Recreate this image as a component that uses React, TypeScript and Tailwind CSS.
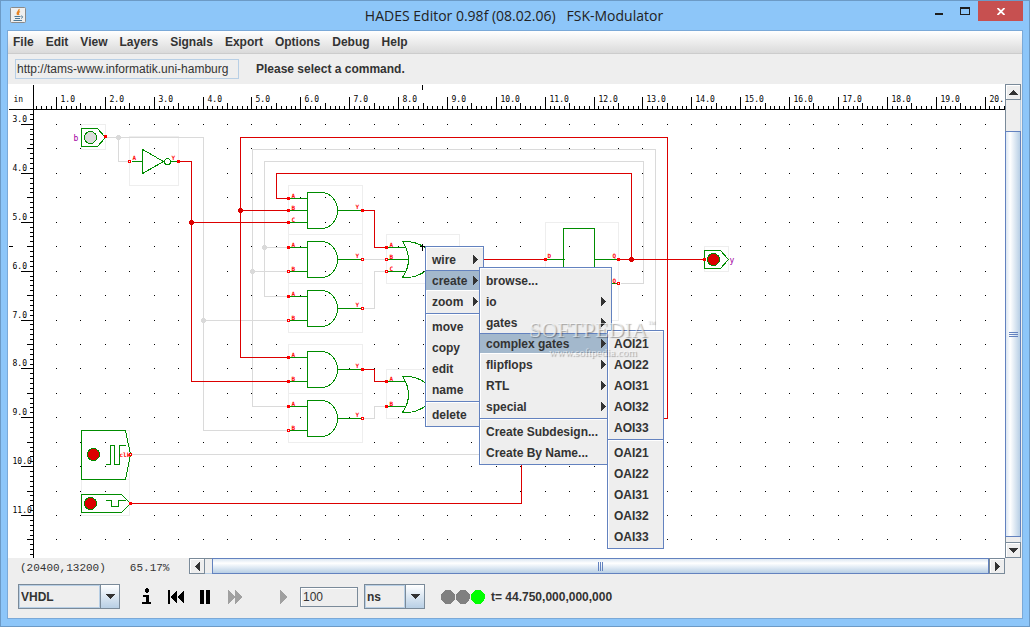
import React from 'react'

const STEP = 48.87
const GREEN = '#008c00'
const RED = '#dc0000'
const GREY = '#dadada'

const menus = ['File', 'Edit', 'View', 'Layers', 'Signals', 'Export', 'Options', 'Debug', 'Help']

type Item = { label?: string; sub?: boolean; active?: boolean }

const mainMenu: Item[] = [
    { label: 'wire', sub: true },
    { label: 'create', sub: true, active: true },
    { label: 'zoom', sub: true },
    {},
    { label: 'move' },
    { label: 'copy' },
    { label: 'edit' },
    { label: 'name' },
    {},
    { label: 'delete' },
]

const createMenu: Item[] = [
    { label: 'browse...' },
    { label: 'io', sub: true },
    { label: 'gates', sub: true },
    { label: 'complex gates', sub: true, active: true },
    { label: 'flipflops', sub: true },
    { label: 'RTL', sub: true },
    { label: 'special', sub: true },
    {},
    { label: 'Create Subdesign...' },
    { label: 'Create By Name...' },
]

const gatesMenu: Item[] = [
    { label: 'AOI21' },
    { label: 'AOI22' },
    { label: 'AOI31' },
    { label: 'AOI32' },
    { label: 'AOI33' },
    {},
    { label: 'OAI21' },
    { label: 'OAI22' },
    { label: 'OAI31' },
    { label: 'OAI32' },
    { label: 'OAI33' },
]

// wires carrying an undefined or low value
const greyWires = [
    'M105 137H203V430H288', 'M118 137V161H129', 'M203 320H288',
    'M252 406V149H655V394', 'M252 406H288', 'M252 271H288',
    'M264 296V161H643V283H620', 'M264 296H288', 'M264 247H288',
    'M362 259H386', 'M362 308H374V271H386', 'M362 418H374V406H386', 'M131 454H521',
]

const redWires = [
    'M178 161H191V381H288', 'M191 222H288',
    'M240 357V137H667V418H640', 'M240 357H288', 'M240 210H288',
    'M276 198V173H631V259', 'M276 198H288',
    'M362 210H374V247H386', 'M362 369H374V381H386',
    'M459 259H545', 'M618 259H704', 'M130 503H521V440',
]

const boxes = [
    [81, 124, 24, 25], [129, 136, 49, 49], [288, 185, 74, 49], [288, 234, 74, 49], [288, 283, 74, 49],
    [288, 344, 74, 49], [288, 393, 74, 49], [386, 234, 73, 49], [386, 369, 73, 49], [545, 222, 73, 98],
    [81, 430, 48, 49], [81, 479, 48, 36], [704, 246, 24, 25],
]

function Pin({ x, y, open }: { x: number; y: number; open?: boolean }) {
    return open
        ? <rect x={x - 1} y={y - 1} width="2" height="2" fill="#fff" stroke="#f00" />
        : <rect x={x - 1.5} y={y - 1.5} width="3" height="3" fill="#f00" />
}

function Tag({ x, y, children }: { x: number; y: number; children: string }) {
    return <text x={x} y={y} fill="#f00" fontSize="6" fontWeight="bold" fontFamily="'DejaVu Sans Mono', monospace">{children}</text>
}

type GateProps = { y: number; inputs: [string, number, boolean?][]; open?: boolean }

function AndGate({ y, inputs, open }: GateProps) {
    return (
        <g>
            <path d={`M307 ${y - 18}H321A16 18 0 0 1 321 ${y + 18}H307ZM337 ${y}H362`} fill="none" stroke={GREEN} />
            {inputs.map(([name, dy, o]) => (
                <g key={name}>
                    <path d={`M288 ${y + dy}H307`} stroke={GREEN} />
                    <Pin x={288} y={y + dy} open={o} />
                    <Tag x={291} y={y + dy - 1}>{name}</Tag>
                </g>
            ))}
            <Pin x={362} y={y} open={open} />
            <Tag x={355} y={y - 2}>Y</Tag>
        </g>
    )
}

function OrGate({ y, inputs }: GateProps) {
    return (
        <g>
            <path d={`M402 ${y - 18}Q414 ${y} 402 ${y + 18}H407Q424 ${y + 17} 437 ${y}Q424 ${y - 17} 407 ${y - 18}ZM437 ${y}H459`} fill="none" stroke={GREEN} />
            {inputs.map(([name, dy, o]) => (
                <g key={name}>
                    <path d={`M386 ${y + dy}H${dy ? 405 : 408}`} stroke={GREEN} />
                    <Pin x={386} y={y + dy} open={o} />
                    <Tag x={389} y={y + dy - 1}>{name}</Tag>
                </g>
            ))}
        </g>
    )
}

function Rulers() {
    const ticks = Array.from({ length: 400 }, (_, i) => i - 4)
    const len = (k: number) => (k % 10 === 0 ? 13 : k % 5 === 0 ? 7 : 4)
    return (
        <g>
            <path d="M8 109H3000M33 84V3000M422 84V89M8 246H12" stroke="#000" />
            {ticks.map((k) => {
                const x = Math.floor(56.5 + (STEP / 10) * k)
                const y = Math.floor(124.55 + (STEP / 10) * k)
                return (
                    <g key={k}>
                        <path d={`M${x} 109V${109.5 - len(k)}`} stroke="#000" />
                        {y > 109 && <path d={`M33 ${y}H${33.5 - len(k)}`} stroke="#000" />}
                    </g>
                )
            })}
            <g fill="#000" fontSize="8" fontWeight="normal" fontFamily="'DejaVu Sans Mono', monospace">
                <text x="13" y="101">in</text>
                {Array.from({ length: 20 }, (_, n) => (
                    <text key={n} x={Math.floor(56.5 + STEP * n) + 4} y="101">{n < 19 ? `${n + 1}.0` : '20.'}</text>
                ))}
                {Array.from({ length: 9 }, (_, n) => (
                    <text key={n} x="12" y={Math.floor(124.55 + STEP * n) - 3}>{`${n + 3}.0`}</text>
                ))}
            </g>
        </g>
    )
}

function Schematic() {
    return (
        <svg className="absolute inset-0 block h-full w-full" shapeRendering="crispEdges" role="img" aria-label="FSK modulator schematic">
            <g transform="translate(-7.5 -83.5)">
                {Array.from({ length: 70 }, (_, i) => Array.from({ length: 18 }, (_, j) => (
                    <rect
                        key={`${i}-${j}`}
                        x={Math.floor(56.5 + (STEP / 2) * i) - 0.5}
                        y={Math.floor(124.55 + (STEP / 2) * j) - 0.5}
                        width="1"
                        height="1"
                    />
                )))}
                {boxes.map(([x, y, w, h]) => <rect key={`${x}-${y}`} x={x} y={y} width={w} height={h} fill="none" stroke="#eee" />)}
                {greyWires.map((d) => <path key={d} d={d} fill="none" stroke={GREY} />)}
                {redWires.map((d) => <path key={d} d={d} fill="none" stroke={RED} />)}
                {[[118, 137], [252, 271], [264, 247], [203, 320]].map(([x, y]) => <circle key={x} cx={x} cy={y} r="2.5" fill={GREY} />)}
                {[[191, 222], [240, 210], [631, 259]].map(([x, y]) => <circle key={x} cx={x} cy={y} r="2.5" fill={RED} />)}

                <g fill="none" stroke={GREEN}>
                    <path d="M81 128H97L105 137L97 146H81Z" />
                    <circle cx="90" cy="137" r="6" fill={GREY} />
                    <path d="M131 161H142M142 149V173L163 161ZM170 161H178" />
                    <circle cx="167" cy="161" r="3" />
                    <path d="M81 430H125L130 454L125 479H81Z" />
                    <path d="M105 464H110V445H114V464H119V445H125" />
                    <circle cx="93" cy="454" r="6" fill={RED} />
                    <path d="M81 494H121L130 503L121 512H81Z" />
                    <path d="M105 500H111V506H118V500H125" />
                    <circle cx="90" cy="503" r="6" fill={RED} />
                    <path d="M563 228H594V300H563ZM545 259H564M594 259H618M594 283H618" />
                    <path d="M704 250H720L728 259L720 268H704Z" />
                    <circle cx="713" cy="259" r="6" fill={RED} />
                </g>

                <AndGate y={210} inputs={[['A', -12], ['B', 0], ['C', 12]]} />
                <AndGate y={259} inputs={[['A', -12], ['B', 12, true]]} open />
                <AndGate y={308} inputs={[['A', -12], ['B', 12, true]]} open />
                <AndGate y={369} inputs={[['A', -12], ['B', 12]]} />
                <AndGate y={418} inputs={[['A', -12], ['B', 12, true]]} open />
                <OrGate y={259} inputs={[['A', -12], ['B', 0, true], ['C', 12, true]]} />
                <OrGate y={394} inputs={[['A', -13], ['B', 12]]} />

                <Pin x={105} y={136} />
                <Pin x={129} y={161} open />
                <Pin x={178} y={161} />
                <Pin x={130} y={454} open />
                <Pin x={130} y={503} />
                <Pin x={545} y={259} />
                <Pin x={618} y={259} />
                <Pin x={618} y={283} open />
                <Pin x={704} y={259} />
                <Tag x={132} y={159}>A</Tag>
                <Tag x={171} y={159}>Y</Tag>
                <Tag x={119} y={456}>clk</Tag>
                <Tag x={547} y={257}>D</Tag>
                <Tag x={612} y={257}>Q</Tag>
                <Tag x={612} y={282}>Q</Tag>
                <g fill="#a000a0" fontSize="8" fontWeight="normal" fontFamily="'DejaVu Sans Mono', monospace">
                    <text x="73" y="140">b</text>
                    <text x="729" y="262">y</text>
                </g>
                <path d="M419 246H426M422 243V250" stroke="#000" />
                <Rulers />
            </g>
        </svg>
    )
}

function PopupMenu({ items, className }: { items: Item[]; className: string }) {
    return (
        <div role="menu" className={`absolute border border-[#6382bf] bg-[#eee] pt-[2px] pb-px shadow-[inset_1px_1px_0_#fff] ${className}`}>
            {items.map((item, i) => item.label ? (
                <button
                    key={i}
                    type="button"
                    role="menuitem"
                    className={`flex h-[21px] w-full items-center justify-between border-y pl-1.5 pr-[5px] whitespace-nowrap ${item.active ? 'border-t-[#6382bf] border-b-white bg-[#a3b8cc]' : 'border-transparent'}`}
                >
                    {item.label}
                    {item.sub && <svg width="5" height="9" shapeRendering="crispEdges"><path d="M0 0L5 4.5L0 9Z" fill="#333" /></svg>}
                </button>
            ) : (
                <div key={i} role="separator" className="h-1 pt-px">
                    <div className="h-[2px] border-t border-b border-t-[#6382bf] border-b-white" />
                </div>
            ))}
        </div>
    )
}

function ScrollButton({ d, label }: { d: string; label: string }) {
    return (
        <button type="button" aria-label={label} className="flex size-4 shrink-0 items-center justify-center border border-[#7a8a99] bg-[#eee] shadow-[inset_1px_1px_0_#fff]">
            <svg width="9" height="9" shapeRendering="crispEdges"><path d={d} fill="#333" /></svg>
        </button>
    )
}

function Combo({ label, value, className }: { label: string; value: string; className: string }) {
    return (
        <div className={`relative flex h-[25px] border border-[#7a8a99] ${className}`}>
            <select aria-label={label} className="min-w-0 flex-1 appearance-none border border-[#b8cfe5] bg-[#eee] pl-px font-bold">
                <option>{value}</option>
            </select>
            <span className="pointer-events-none flex w-[19px] items-center justify-center border-l border-[#7a8a99] bg-linear-to-b from-white to-[#b8cfe5]">
                <svg width="10" height="5" shapeRendering="crispEdges"><path d="M0 0H10L5 5Z" fill="#333" /></svg>
            </span>
        </div>
    )
}

function App() {
    return (
        <div className="flex h-screen flex-col border border-[#6c9ac6] bg-[#8dc6f9] px-[6px] pb-[7px] font-['Liberation_Sans',Arial,sans-serif] text-xs font-bold text-[#333]">
            <header className="flex h-[29px] shrink-0 items-start">
                <svg className="mt-1.5 ml-[3px]" width="16" height="16" viewBox="0 0 16 16" fill="none">
                    <rect x="0.5" y="0.5" width="15" height="15" rx="1" fill="#efefef" stroke="#8a8a8a" />
                    <path d="M9 2C10 4 5.500 5 7.500 8M10 4.500C8 5.500 8 6.500 9 8" stroke="#e8821e" strokeWidth="1.300" />
                    <path d="M4.500 9.500H10.500M5 11.500H10M3.500 13.500H12M11 9C13.500 9 13 11 11 11.300" stroke="#4d7896" />
                </svg>
                <h1 className="flex-1 pt-1 pl-[76px] text-center font-['Open_Sans','Noto_Sans',sans-serif] text-[14px] leading-[22px] font-normal whitespace-pre text-[#222]">HADES Editor 0.98f (08.02.06)   FSK-Modulator</h1>
                <div className="flex">
                    <button type="button" aria-label="Minimize" className="flex h-[19px] w-[26px] items-center justify-center">
                        <svg width="8" height="9"><path d="M0 7H8V9H0Z" fill="#1e1e1e" /></svg>
                    </button>
                    <button type="button" aria-label="Maximize" className="flex h-[19px] w-[26px] items-center justify-center">
                        <svg width="10" height="9"><path d="M0 1H10V9H0ZM1 3V8H9V3Z" fill="#1e1e1e" fillRule="evenodd" /></svg>
                    </button>
                    <button type="button" aria-label="Close" className="flex h-5 w-[45px] items-center justify-center bg-[#c75050]">
                        <svg width="8" height="7"><path d="M0.500 0L7.500 7M7.500 0L0.500 7" stroke="#fff" strokeWidth="1.800" /></svg>
                    </button>
                </div>
            </header>

            <main className="flex min-h-0 flex-1 flex-col border border-[#7aa9d8] bg-[#eee]">
                <nav className="flex h-[23px] shrink-0 gap-3 border-b border-[#ccc] bg-linear-to-b from-white to-[#dadada] pl-[5px]">
                    {menus.map((m) => <button key={m} type="button">{m}</button>)}
                </nav>
                <div className="flex h-[30px] shrink-0 items-center gap-[17px] pl-[7px]">
                    <input aria-label="Design URL" defaultValue="http://tams-www.informatik.uni-hamburg" className="h-5 w-[224px] border border-[#b8cfe5] bg-[#eee] px-px font-normal" />
                    <span>Please select a command.</span>
                </div>

                <div className="flex min-h-0 flex-1">
                    <section className="relative min-w-0 flex-1 overflow-hidden bg-white">
                        <Schematic />
                        <PopupMenu items={mainMenu} className="top-[162px] left-[417px] w-[59px]" />
                        <PopupMenu items={createMenu} className="top-[183px] left-[471px] w-[133px]" />
                        <PopupMenu items={gatesMenu} className="top-[246px] left-[599px] w-[57px]" />
                        <div className="pointer-events-none absolute top-[232px] left-[521px] font-['Liberation_Serif',serif] font-normal text-white/60 [text-shadow:1px_1px_1px_#0005]">
                            <p className="flex items-start text-[22px] leading-[28px]">SOFTPEDIA<span className="text-[8px] leading-[16px]">™</span></p>
                            <p className="pl-5 text-[11px] leading-[16px]">www.softpedia.com</p>
                        </div>
                    </section>
                    <div className="mr-px flex w-4 flex-col">
                        <ScrollButton label="Scroll up" d="M0 7L4.500 2L9 7Z" />
                        <div className="h-[31px] border-x border-[#b8cfe5] border-l-[#7a8a99]" />
                        <div className="flex flex-1 flex-col items-center justify-center gap-px border border-[#6382bf] bg-linear-to-r from-[#dce7f2] via-white via-30% to-[#b8cfe5]">
                            <i className="h-px w-[9px] bg-[#6382bf]" />
                            <i className="h-px w-[9px] bg-[#6382bf]" />
                            <i className="h-px w-[9px] bg-[#6382bf]" />
                        </div>
                        <div className="h-[5px] border-x border-[#b8cfe5] border-l-[#7a8a99]" />
                        <ScrollButton label="Scroll down" d="M0 2L4.500 7L9 2Z" />
                    </div>
                </div>

                <div className="flex h-[17px] shrink-0 items-start pl-3 pr-[17px]">
                    <p className="flex w-[169px] shrink-0 gap-6 pt-[2px] font-['Liberation_Mono',monospace] text-[11px] leading-[16px] font-normal"><span>(20400,13200)</span><span>65.17%</span></p>
                    <div className="flex h-4 flex-1">
                        <ScrollButton label="Scroll left" d="M7 0L2 4.500L7 9Z" />
                        <div className="w-[7px] border-y border-[#b8cfe5] border-t-[#7a8a99]" />
                        <div className="flex flex-1 items-center justify-center gap-px border border-[#6382bf] bg-linear-to-b from-[#dce7f2] via-white via-30% to-[#b8cfe5]">
                            <i className="h-[9px] w-px bg-[#6382bf]" />
                            <i className="h-[9px] w-px bg-[#6382bf]" />
                            <i className="h-[9px] w-px bg-[#6382bf]" />
                        </div>
                        <ScrollButton label="Scroll right" d="M2 0L7 4.500L2 9Z" />
                    </div>
                </div>

                <footer className="flex h-[43px] shrink-0 items-center pl-2.5">
                    <Combo label="Language" value="VHDL" className="w-[102px]" />
                    <button type="button" aria-label="Info" className="ml-[22px]">
                        <svg width="10" height="17" shapeRendering="crispEdges"><path d="M3 1H4V0H6V1H7V4H6V5H4V4H3ZM1 7H7V14H9V16H0V14H4V9H1Z" /></svg>
                    </button>
                    <button type="button" aria-label="Rewind" className="ml-4">
                        <svg width="17" height="14" shapeRendering="crispEdges"><path d="M0 0H2V14H0ZM9 0V14L2 7ZM16 0V14L9 7Z" /></svg>
                    </button>
                    <button type="button" aria-label="Pause" className="ml-[15px]">
                        <svg width="11" height="14" shapeRendering="crispEdges"><path d="M0 0H4V14H0ZM6 0H10V14H6Z" /></svg>
                    </button>
                    <button type="button" aria-label="Fast forward" className="ml-[17px]">
                        <svg width="15" height="14" shapeRendering="crispEdges"><path d="M0 0L7 7L0 14ZM7 0L14 7L7 14Z" fill="#a0a0a0" /></svg>
                    </button>
                    <button type="button" aria-label="Step" className="ml-9">
                        <svg width="8" height="14" shapeRendering="crispEdges"><path d="M1 0L8 7L1 14Z" fill="#a0a0a0" /></svg>
                    </button>
                    <input aria-label="Step size" defaultValue="100" className="ml-[13px] h-5 w-[58px] border border-[#7a8a99] bg-[#eee] px-[2px] font-normal shadow-[inset_1px_1px_0_#fff]" />
                    <div className="ml-1.5"><Combo label="Time unit" value="ns" className="w-[61px]" /></div>
                    <svg className="ml-4" width="45" height="14" shapeRendering="crispEdges">
                        <circle cx="7" cy="7" r="7" fill="#808080" />
                        <circle cx="22" cy="7" r="7" fill="#808080" />
                        <circle cx="37" cy="7" r="7" fill="#0f0" />
                    </svg>
                    <output className="ml-[5px]">t= 44.750,000,000,000</output>
                </footer>
            </main>
        </div>
    )
}

export default App
